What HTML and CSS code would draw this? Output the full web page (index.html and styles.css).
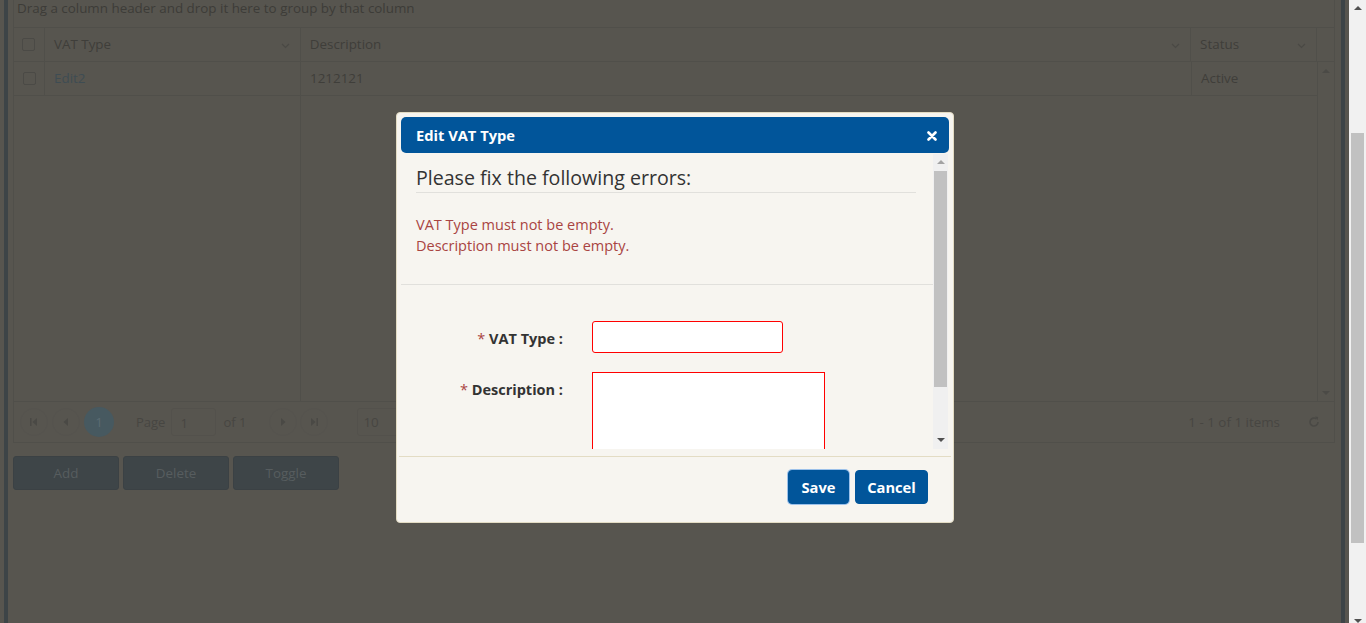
FILE: index.html
```html
<!DOCTYPE html>
<html lang="en">
<head>
<meta charset="utf-8">
<title>Edit VAT Type</title>
<link rel="stylesheet" href="styles.css">
</head>
<body>
<div class="viewport">
  <div class="page">
    <div class="frame">
      <div class="grid">
        <div class="group-bar">Drag a column header and drop it here to group by that column</div>
        <div class="grid-head">
          <div class="cell chk"><span class="cb"></span></div>
          <div class="cell c-type"><span>VAT Type</span><svg class="chev" width="9" height="6" viewBox="0 0 9 6"><path d="M1 1l3.5 3.5L8 1" fill="none" stroke="#4a4945" stroke-width="1.2"/></svg></div>
          <div class="cell c-desc"><span>Description</span><svg class="chev" width="9" height="6" viewBox="0 0 9 6"><path d="M1 1l3.5 3.5L8 1" fill="none" stroke="#4a4945" stroke-width="1.2"/></svg></div>
          <div class="cell c-status"><span>Status</span><svg class="chev" width="9" height="6" viewBox="0 0 9 6"><path d="M1 1l3.5 3.5L8 1" fill="none" stroke="#4a4945" stroke-width="1.2"/></svg></div>
          <div class="cell gutter"></div>
        </div>
        <div class="grid-body">
          <div class="rows">
            <div class="row">
              <div class="cell chk"><span class="cb"></span></div>
              <div class="cell c-type"><span class="link">Edit2</span></div>
              <div class="cell c-desc">1212121</div>
              <div class="cell c-status">Active</div>
            </div>
          </div>
          <div class="vscroll">
            <span class="tri up"></span>
            <span class="tri down"></span>
          </div>
        </div>
        <div class="pager">
          <div class="pager-left">
            <span class="pbtn"><svg width="10" height="8" viewBox="0 0 10 8"><rect x="1" y="0" width="1.5" height="8" fill="#4a4945"/><path d="M8 0v8L3.5 4z" fill="#4a4945"/></svg></span>
            <span class="pbtn"><svg width="10" height="8" viewBox="0 0 10 8"><path d="M7 0v8L2.5 4z" fill="#4a4945"/></svg></span>
            <span class="pnum">1</span>
            <span class="plabel">Page</span>
            <span class="pinput">1</span>
            <span class="pof">of 1</span>
            <span class="pbtn next"><svg width="10" height="8" viewBox="0 0 10 8"><path d="M3 0v8L7.5 4z" fill="#4a4945"/></svg></span>
            <span class="pbtn"><svg width="10" height="8" viewBox="0 0 10 8"><path d="M2 0v8L6.5 4z" fill="#4a4945"/><rect x="7.5" y="0" width="1.5" height="8" fill="#4a4945"/></svg></span>
            <span class="psize">10</span>
          </div>
          <div class="pager-right">
            <span class="pinfo">1 - 1 of 1 items</span>
            <svg class="refresh" width="14" height="14" viewBox="0 0 14 14"><path d="M11 7a4 4 0 1 1-1.6-3.2" fill="none" stroke="#4a4945" stroke-width="1.6"/><path d="M8 1.5l3.2 0.6-0.6 3.2z" fill="#4a4945"/></svg>
          </div>
        </div>
      </div>
      <div class="actions">
        <span class="abtn">Add</span>
        <span class="abtn">Delete</span>
        <span class="abtn">Toggle</span>
      </div>
    </div>
  </div>
  <div class="win-scroll">
    <span class="wtri up"></span>
    <div class="wtrack"><div class="wthumb"></div></div>
    <span class="wtri down"></span>
  </div>
</div>

<div class="dialog">
  <div class="dlg-title">
    <span>Edit VAT Type</span>
    <svg class="close" width="10" height="10" viewBox="0 0 10 10"><path d="M1.5 1.5l7 7M8.5 1.5l-7 7" stroke="#fff" stroke-width="2.6" stroke-linecap="round"/></svg>
  </div>
  <div class="dlg-body">
    <div class="dlg-scroll">
      <div class="errors">
        <h3 class="err-title">Please fix the following errors:</h3>
        <ul class="err-list">
          <li>VAT Type must not be empty.</li>
          <li>Description must not be empty.</li>
        </ul>
      </div>
      <form class="form">
        <label class="flabel"><span class="req">*</span> VAT Type :</label>
        <div class="fctl"><input class="finput" type="text"></div>
        <label class="flabel"><span class="req">*</span> Description :</label>
        <div class="fctl"><textarea class="farea"></textarea></div>
      </form>
    </div>
    <div class="dlg-sbar">
      <span class="dtri up"></span>
      <div class="dtrack"><div class="dthumb"></div></div>
      <span class="dtri down"></span>
    </div>
  </div>
  <div class="dlg-foot">
    <button class="dbtn save" type="button">Save</button>
    <button class="dbtn cancel" type="button">Cancel</button>
  </div>
</div>
</body>
</html>
```

FILE: styles.css
```css
* { box-sizing: border-box; }
html, body { margin: 0; padding: 0; height: 100%; overflow: hidden; }
body {
  font-family: "Open Sans", "Noto Sans", sans-serif;
  font-size: 13px;
  background: #57554f;
  color: #3f3e3a;
}
.viewport { display: flex; height: 623px; }
.page { width: 1349px; height: 623px; background: #57554f; }
.frame {
  margin: 0 4px;
  height: 623px;
  border-left: 4px solid #3d4447;
  border-right: 4px solid #3d4447;
  padding: 0 6px 0 5px;
}
.grid {
  border-left: 1px solid #504f4a;
  border-right: 1px solid #504f4a;
  border-bottom: 1px solid #504f4a;
}
.group-bar {
  height: 28px;
  border-bottom: 1px solid #504f4a;
  padding: 0 0 0 3px;
  line-height: 17px;
  color: #3d3c38;
  font-size: 13.4px;
}
.grid-head, .row { display: flex; }
.grid-head { height: 34px; border-bottom: 1px solid #504f4a; }
.cell {
  display: flex;
  align-items: center;
  padding: 0 9px 1px;
  border-left: 1px solid #504f4a;
  font-size: 13.4px;
  color: #3f3e3a;
}
.cell.chk { width: 30px; border-left: none; justify-content: center; padding: 0; }
.c-type { width: 256px; justify-content: space-between; }
.c-desc { width: 891px; justify-content: space-between; }
.c-status { width: 126px; justify-content: space-between; }
.gutter { width: 18px; padding: 0; }
.chev { margin-right: 1px; margin-top: 3px; }
.cb {
  width: 13px; height: 13px;
  border: 1px solid #4b4a46;
  border-radius: 2px;
}
.grid-body { display: flex; height: 339px; }
.rows {
  width: 1303px;
  background: linear-gradient(#504f4a, #504f4a) 286px 0 / 1px 100% no-repeat;
}
.row { height: 34px; border-bottom: 1px solid #504f4a; }
.row .c-type, .row .c-desc, .row .c-status { justify-content: flex-start; }
.link { color: #3e4c53; }
.vscroll {
  width: 18px;
  border-left: 1px solid #504f4a;
  display: flex;
  flex-direction: column;
  justify-content: space-between;
  align-items: center;
  padding: 7px 0 6px;
}
.tri { width: 0; height: 0; border-left: 4px solid transparent; border-right: 4px solid transparent; }
.tri.up { border-bottom: 4px solid #4b4a46; }
.tri.down { border-top: 4px solid #4b4a46; }
.pager {
  height: 41px;
  border-top: 1px solid #504f4a;
  display: flex;
  align-items: center;
  justify-content: space-between;
  padding: 0 0 0 6px;
}
.pager-left, .pager-right { display: flex; align-items: center; }
.pbtn {
  width: 28px; height: 28px;
  border-radius: 50%;
  border: 1px solid #55534e;
  display: flex; align-items: center; justify-content: center;
  margin-right: 4px;
}
.pbtn.next { margin-left: 23px; margin-right: 3px; }
.pnum {
  width: 30px; height: 30px; border-radius: 50%;
  background: #475960; color: #5b6b72;
  display: flex; align-items: center; justify-content: center;
  font-size: 13.4px;
}
.plabel { margin-left: 22px; color: #474642; }
.pinput {
  margin-left: 6px;
  width: 45px; height: 28px;
  border: 1px solid #53514c;
  border-radius: 3px;
  padding: 5px 0 0 8px;
  color: #474642;
}
.pof { margin-left: 7px; color: #474642; }
.psize {
  margin-left: 25px;
  width: 60px; height: 28px;
  border: 1px solid #53514c;
  border-radius: 3px;
  padding: 4px 0 0 5px;
  color: #474642;
  font-size: 13.4px;
}
.pinfo { color: #474642; font-size: 13.4px; }
.refresh { margin-left: 27px; margin-right: 13px; }
.actions { display: flex; gap: 4px; margin-top: 13px; }
.abtn {
  width: 106px; height: 34px;
  background: #3e4548;
  border: 1px solid #3b4144;
  border-radius: 3px;
  color: #575d5f;
  display: flex; align-items: center; justify-content: center;
  font-size: 13.4px;
}
.win-scroll {
  width: 17px; height: 623px;
  background: #f1f1f1;
  display: flex; flex-direction: column; align-items: center;
}
.wtri { width: 0; height: 0; border-left: 4px solid transparent; border-right: 4px solid transparent; }
.wtri.up { border-bottom: 4px solid #505050; margin-top: 6px; }
.wtri.down { border-top: 4px solid #505050; margin-top: 6px; }
.wtrack { flex: 1; width: 100%; padding: 0 2px; }
.wthumb { margin-top: 123px; height: 410px; background: #c1c1c1; }

/* dialog */
.dialog {
  position: absolute;
  left: 396px; top: 112px;
  width: 558px; height: 411px;
  background: #f7f5f0;
  border: 1px solid #e3dcc4;
  border-radius: 4px;
  padding: 4px;
}
.dlg-title {
  height: 36px;
  background: #01559a;
  border-radius: 5px;
  display: flex; align-items: center; justify-content: space-between;
  padding: 0 12px 0 15px;
  color: #fff;
  font-weight: bold;
  font-size: 14.7px;
}
.close { margin-top: 2px; }
.dlg-body {
  display: flex;
  margin-top: 1px;
  height: 295px;
  overflow: hidden;
}
.dlg-scroll { width: 532px; height: 295px; overflow: hidden; }
.errors { padding: 12px 17px 0 15px; border-bottom: 1px solid #e1e0dc; height: 131px; }
.err-title {
  margin: 0;
  font-size: 19.6px;
  font-weight: normal;
  line-height: 24px;
  color: #333;
  padding-bottom: 2px;
  border-bottom: 1px solid #e1e0dc;
}
.err-list { list-style: none; margin: 21px 0 0; padding: 0; color: #a94442; font-size: 14.5px; line-height: 21px; }
.form {
  display: grid;
  grid-template-columns: 177px 1fr;
  row-gap: 19px;
  padding-top: 36px;
}
.flabel {
  text-align: right;
  padding: 8px 15px 0 0;
  line-height: 20px;
  font-weight: bold;
  color: #333;
  font-size: 14.5px;
}
.req { color: #a94442; font-weight: normal; }
.fctl { padding-left: 14px; }
.finput {
  display: block;
  width: 191px; height: 32px;
  border: 1px solid #f00;
  border-radius: 3px;
  background: #fff;
  outline: none;
}
.farea {
  display: block;
  width: 233px; height: 110px;
  border: 1px solid #f00;
  border-radius: 0;
  background: #fff;
  resize: none;
  outline: none;
}
.dlg-sbar {
  width: 15px; height: 295px;
  background: #f0f0f0;
  display: flex; flex-direction: column; align-items: center;
}
.dtri { width: 0; height: 0; border-left: 4px solid transparent; border-right: 4px solid transparent; }
.dtri.up { border-bottom: 4px solid #a3a3a3; margin-top: 6px; }
.dtri.down { border-top: 4px solid #505050; margin-bottom: 7px; }
.dtrack { flex: 1; width: 100%; padding: 0 1px; }
.dthumb { margin-top: 7px; height: 216px; background: #c1c1c1; }
.dlg-foot {
  margin: 7px -2px 0;
  border-top: 1px solid #e3dcc4;
  padding: 12px 23px 0 0;
  display: flex; justify-content: flex-end; align-items: flex-start; gap: 5px;
}
.dbtn {
  height: 34px;
  background: #01559a;
  color: #fff;
  border: 1px solid #01559a;
  border-radius: 4px;
  font-family: "Open Sans", "Noto Sans", sans-serif;
  font-weight: bold;
  font-size: 14.7px;
  padding: 0;
  margin-top: 1px;
}
.dbtn.save { box-shadow: 0 0 0 1px #9cc1ea; width: 61px; margin-right: 1px; }
.dbtn.cancel { width: 73px; }
```
